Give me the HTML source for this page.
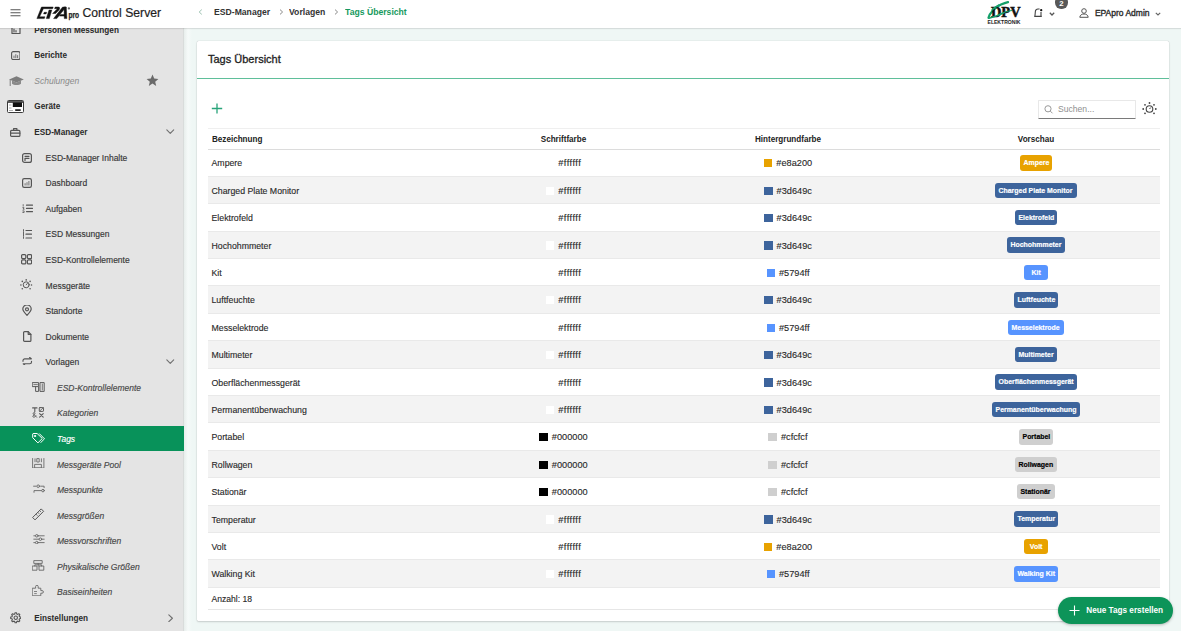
<!DOCTYPE html>
<html><head><meta charset="utf-8">
<style>
*{box-sizing:border-box;margin:0;padding:0}
html,body{width:1181px;height:631px;overflow:hidden;background:#eff7f5;font-family:"Liberation Sans",sans-serif;color:#333;position:relative}
#hdr{position:absolute;left:0;top:0;width:1181px;height:28px;background:#fff;z-index:5;box-shadow:0 1px 1px rgba(0,0,0,.10)}
#hdr svg{position:absolute}
#hdr .ttl{position:absolute;left:82.5px;top:5.5px;font-size:12.2px;line-height:15px;color:#1e1e1e;-webkit-text-stroke:.2px #1e1e1e}
.bc{position:absolute;top:5.5px;font-size:9.6px;line-height:12px;font-weight:bold;color:#333;transform:scaleX(.9);transform-origin:left}
.usr{position:absolute;left:1094.9px;top:7px;font-size:8.5px;line-height:12px;color:#2a2a2a;-webkit-text-stroke:.35px #2a2a2a}
#side{position:absolute;left:0;top:0;width:184px;height:631px;background:#e4e4e4;z-index:2;border-right:1px solid #d9dcdb}
#shadow{position:absolute;left:184px;top:28px;width:8px;height:603px;background:linear-gradient(90deg,#e8eeec,#f6faf9 50%,#eff7f5);z-index:1}
.it{position:absolute;left:0;width:184px;height:25.6px;font-size:8.5px;line-height:25.6px;white-space:nowrap}
.it svg{position:absolute}
.it span{position:absolute;top:1px}
.t1{left:34.3px;font-weight:bold;color:#2a2a2a;font-size:8.2px;margin-top:0}
.t2{left:45.6px;color:#363636;-webkit-text-stroke:.15px #363636}
.t3{left:57px;color:#474747;font-style:italic;-webkit-text-stroke:.15px #474747}
.dis .t1{font-weight:normal;font-style:italic;color:#8a8a8a;font-size:8.5px;margin-top:0}
.act{background:#08925a;height:25.1px}
.act span{color:#fff;-webkit-text-stroke:.15px #fff}
#card{position:absolute;left:197px;top:41px;width:972px;height:580px;background:#fff;border-radius:1.5px;box-shadow:0 0 1px rgba(0,0,0,.3),0 1px 2px rgba(0,0,0,.15)}
#cardline{position:absolute;left:197px;top:78px;width:972px;height:1px;background:#5fbf9a}
#cardttl{position:absolute;left:208px;top:51.5px;font-size:11px;line-height:15px;color:#222;-webkit-text-stroke:.3px #222}
.hl{position:absolute;left:208px;width:952px;height:1px;background:#efefef}
.hl2{position:absolute;left:208px;width:952px;height:1px;background:#dcdcdc}
.th{position:absolute;top:132.5px;font-size:9px;line-height:12px;font-weight:bold;color:#222;transform:scaleX(.9);transform-origin:left}
.thc{text-align:center;transform-origin:center}
.row{position:absolute;left:208px;width:952px;height:27.4px;border-bottom:1px solid #e9e9e9;font-size:8.75px;color:#282828}
.nm,.hx{-webkit-text-stroke:.12px #282828}
.row.gr{background:#f3f3f3}
.row span{position:absolute;top:1px;line-height:27px;height:27px;white-space:nowrap}
.nm{left:3.5px}
.cc{text-align:center}
.sw{display:inline-block;width:8.5px;height:8.3px;margin-right:4px;vertical-align:-1px}
.hx{font-style:normal;font-size:9.2px}
.hx.ff{letter-spacing:.5px}
.pv{position:absolute;top:5.9px;height:15.4px;border-radius:3px;text-align:center;white-space:nowrap}
.pv i{display:block;font-style:normal;font-weight:bold;font-size:8.1px;-webkit-text-stroke:.2px currentColor;line-height:15.4px;transform:scaleX(.857);transform-origin:center;margin:0 -20px}
.ft{position:absolute;left:208px;width:952px;height:22px;border-bottom:1px solid #e6e6e6;font-size:8.6px;line-height:22px;padding-left:3.5px;color:#282828;-webkit-text-stroke:.12px #282828}
.epa{position:absolute;left:36px;top:1.5px;font-size:15.6px;line-height:20px;font-weight:bold;font-style:italic;color:#111;letter-spacing:-1.2px;transform:scaleX(1.05);transform-origin:left}
.reg{position:absolute;left:67.5px;top:4px;font-size:5px;line-height:6px;color:#222}
.pro{position:absolute;left:68.5px;top:10px;font-size:7.6px;line-height:10px;font-weight:bold;color:#222;letter-spacing:-.3px}
.nbadge{position:absolute;left:1055.4px;top:-3.8px;width:12.3px;height:12.3px;border-radius:50%;background:#585858;color:#fff;font-size:7.8px;font-weight:bold;line-height:12.3px;text-align:center;padding-top:1.6px}
.srch{position:absolute;left:1038px;top:99.5px;width:98px;height:19px;background:#fff;border:1px solid #e8e8e8;border-bottom:1px solid #7a7a7a;border-radius:1px}
.srch span{position:absolute;left:19px;top:2.2px;font-size:8.6px;line-height:12px;color:#8f8f8f}
.fab{position:absolute;left:1058.3px;top:597.2px;width:115px;height:27.2px;border-radius:14px;background:#0d9459;box-shadow:0 1px 3px rgba(0,0,0,.25);z-index:6}
.fab span{position:absolute;left:28px;top:8px;font-size:8.2px;line-height:11px;font-weight:bold;color:#fff;white-space:nowrap}

</style></head><body>
<div id="hdr">
<svg style="left:10px;top:9px" width="11" height="8" viewBox="0 0 11 8"><path d="M0.5 .75h10M0.5 3.75h10M0.5 6.75h10" stroke="#555" stroke-width="1"/></svg>
<svg style="left:34px;top:3px" width="48" height="20" viewBox="34 3 48 20"><g fill="#111" stroke="#111" stroke-width=".45" stroke-linejoin="round">
<path d="M41.5 7H53.2L52.6 8.7H43.4L39.6 16.8H45L44.3 18.6H36.9z"/>
<path d="M44.2 12.3H46.7L46.1 13.9H43.6z"/>
<path d="M49 10.1H51.8L49.3 18.6H46.3z"/>
<path d="M55.2 7H58.2C60.2 7 60 8.8 59 10L55.6 13.5H52.6L56.9 9.2C57.3 8.8 57.2 8.7 56.6 8.7H54.6z"/>
<path d="M62.6 7H66L56.8 18.6H53.6z"/>
<path d="M64 7H66.3L66.9 18.6H64.3z"/>
<path d="M60.5 14.6H65V16.1H59.3z"/>
</g><circle cx="68.9" cy="8.4" r="1.15" fill="#666"/>
<text x="68.4" y="18.4" font-family="Liberation Sans" font-weight="bold" font-size="8.6" fill="#222" stroke="#222" stroke-width=".25" textLength="10.7" lengthAdjust="spacingAndGlyphs">pro</text></svg>
<span class="ttl">Control Server</span>
<svg style="left:198px;top:9px" width="5" height="6" viewBox="0 0 5 6"><path d="M3.8 .6L1.2 3l2.6 2.4" fill="none" stroke="#9cc0b0" stroke-width="1"/></svg>
<span class="bc" style="left:214px">ESD-Manager</span>
<svg style="left:278.5px;top:9px" width="5" height="6" viewBox="0 0 5 6"><path d="M1 .6L3.6 3 1 5.4" fill="none" stroke="#8a8a8a" stroke-width="1"/></svg>
<span class="bc" style="left:289px">Vorlagen</span>
<svg style="left:333.5px;top:9px" width="5" height="6" viewBox="0 0 5 6"><path d="M1 .6L3.6 3 1 5.4" fill="none" stroke="#8a8a8a" stroke-width="1"/></svg>
<span class="bc" style="left:345px;color:#16995d">Tags Übersicht</span>
<svg style="left:986px;top:1px" width="37" height="25" viewBox="0 0 37 25">
 <path d="M2.5 16.8C3.5 12 9 6.5 15 3.6c2.5-1.2 5.5-2.2 7-2.5" fill="none" stroke="#14a06a" stroke-width="2.2" stroke-linecap="round"/><text x="5" y="16.2" font-family="Liberation Serif" font-weight="bold" font-size="14.5" fill="#111" stroke="#111" stroke-width=".5" textLength="29.5" lengthAdjust="spacingAndGlyphs">DPV</text>
 <path d="M3 17.2c4-1 9-2.5 14-4.8M6 9c2-2 5-4 7-5" fill="none" stroke="#14a06a" stroke-width="1.4" stroke-linecap="round"/>
 <path d="M12 14c4-2 9-4 14-4.5" fill="none" stroke="#14a06a" stroke-width="1.2"/>
 <text x="1.5" y="22.6" font-family="Liberation Sans" font-weight="bold" font-size="6" fill="#222" textLength="33" lengthAdjust="spacingAndGlyphs">ELEKTRONIK</text>
</svg>
<svg style="left:1033px;top:7.5px" width="11" height="10" viewBox="0 0 11 10"><path d="M1.2 8.4h7.6M1.9 8.3L2.4 3.2C2.6 1.8 3.6 1 5 1h1.6M8 4v4.3" fill="none" stroke="#444" stroke-width="1.1"/><circle cx="8.2" cy="2.2" r="1.15" fill="#111"/></svg>
<svg style="left:1049px;top:11.8px" width="6" height="4" viewBox="0 0 6 4"><path d="M.8.8L3 3 5.2.8" fill="none" stroke="#555" stroke-width="1.25"/></svg>
<div class="nbadge">2</div>
<svg style="left:1079px;top:8px" width="10" height="10" viewBox="0 0 10 10"><circle cx="5" cy="3" r="2.3" fill="none" stroke="#555" stroke-width="1"/><path d="M.8 9.3C1 7 2.8 6 5 6s4 1 4.2 3.3z" fill="none" stroke="#555" stroke-width="1"/></svg>
<span class="usr">EPApro Admin</span>
<svg style="left:1155px;top:11.5px" width="6" height="4" viewBox="0 0 6 4"><path d="M.8.8L3 3 5.2.8" fill="none" stroke="#666" stroke-width="1.15"/></svg>
</div>
<div id="side">
<div class="it" style="top:16.72px"><svg style="left:10.5px;top:7.28px" width="10" height="11" viewBox="0 0 10 11" fill="none" stroke="#555" stroke-width="1.2" stroke-linecap="round" stroke-linejoin="round"><path d="M1 1v8.5h8V4"/><path d="M3 5v3M5 6.5v1.5"/></svg><span class="t1">Personen Messungen</span></div>
<div class="it" style="top:42.30px"><svg style="left:10.6px;top:8.5px" width="9.6" height="9.2" viewBox="0 0 9.6 9.2" fill="none" stroke="#555" stroke-width="1.1" stroke-linecap="round" stroke-linejoin="round"><rect x=".6" y=".6" width="8.4" height="8" rx="1.6"/><path d="M3 6.8V5M4.8 6.8V3.6M6.6 6.8V4.6" stroke-width=".8"/></svg><span class="t1">Berichte</span></div>
<div class="it dis" style="top:67.88px"><svg style="left:8.5px;top:8.42px" width="15" height="10.5" viewBox="0 0 15 10.5" fill="none" stroke="#555" stroke-width="1.2" stroke-linecap="round" stroke-linejoin="round"><path d="M7.5 0.3L14.8 3.4 7.5 6.5 0.2 3.4z" fill="#7d7d7d" stroke="none"/><path d="M3 4.6v3.2c1.5 1.6 7.5 1.6 9 0V4.6L7.5 6.6z" fill="#8a8a8a" stroke="none"/><path d="M1.2 3.6v6" stroke="#7d7d7d" stroke-width="1"/></svg><span class="t1">Schulungen</span><svg style="left:145.5px;top:6.62px" width="13" height="12.5" viewBox="0 0 13 12.5" fill="none" stroke="#555" stroke-width="1.2" stroke-linecap="round" stroke-linejoin="round"><path d="M6.5.6l1.7 4 4.2.3-3.2 2.8 1 4.2-3.7-2.3-3.7 2.3 1-4.2L.6 4.9l4.2-.3z" fill="#6a6a6a" stroke="none"/></svg></div>
<div class="it" style="top:93.46px"><svg style="left:7.2px;top:6.34px" width="17" height="13" viewBox="0 0 17 13"><rect x=".5" y=".5" width="16" height="12" rx="1" fill="#fff" stroke="#3a3a3a" stroke-width="1"/><rect x="1" y="1" width="15" height="2" fill="#5a5a5a"/><rect x="5.8" y="2.5" width="9.2" height="4.5" fill="#111"/><rect x="8.2" y="9.3" width="5.5" height="1.6" fill="#111"/><path d="M2 5h2.5M2 8h2.5M2 10.5h4" stroke="#999" stroke-width=".8"/></svg><span class="t1">Geräte</span></div>
<div class="it" style="top:119.04px"><svg style="left:10.3px;top:8.56px" width="10.5" height="9" viewBox="0 0 10.5 9" fill="none" stroke="#555" stroke-width="1.2" stroke-linecap="round" stroke-linejoin="round"><rect x=".6" y="2.4" width="9.3" height="6" rx="1"/><path d="M3.6 2.4V.7h3.3v1.7M.6 5.2h9.3"/></svg><span class="t1">ESD-Manager</span><svg style="left:166px;top:9.6px" width="8.5" height="5.5" viewBox="0 0 8.5 5.5" fill="none" stroke="#707070" stroke-width="1.1" stroke-linecap="round" stroke-linejoin="round"><path d="M.8 .8l3.45 3.6L7.7 .8"/></svg></div>
<div class="it" style="top:144.62px"><svg style="left:22px;top:8.28px" width="10" height="10" viewBox="0 0 10 10" fill="none" stroke="#555" stroke-width="1.2" stroke-linecap="round" stroke-linejoin="round"><rect x=".6" y=".6" width="8.8" height="8.8" rx="2"/><path d="M3 3.3h4M3 5.3h4M3 7.5V5.3"/></svg><span class="t2">ESD-Manager Inhalte</span></div>
<div class="it" style="top:170.20px"><svg style="left:22px;top:8.2px" width="10" height="10" viewBox="0 0 10 10" fill="none" stroke="#555" stroke-width="1.2" stroke-linecap="round" stroke-linejoin="round"><rect x=".6" y=".6" width="8.8" height="8.8" rx="1.6"/><path d="M3.1 7.1V5.6M5 7.1V4.6M6.9 7.1V3.4" stroke-width=".8"/></svg><span class="t2">Dashboard</span></div>
<div class="it" style="top:195.78px"><svg style="left:21.6px;top:8.62px" width="11" height="9" viewBox="0 0 11 9" fill="none" stroke="#555" stroke-width="1.2" stroke-linecap="round" stroke-linejoin="round"><path d="M4.5 1.2h6M4.5 4.4h6M4.5 7.6h6" stroke-width="1.2"/><path d="M1.2 .6v1.5M.8 3.6h1.2l-1 1.6h1.2M.8 6.9h1.3v1.6H.8" stroke-width=".8"/></svg><span class="t2">Aufgaben</span></div>
<div class="it" style="top:221.36px"><svg style="left:22px;top:7.84px" width="10" height="10.5" viewBox="0 0 10 10.5" fill="none" stroke="#555" stroke-width="1.2" stroke-linecap="round" stroke-linejoin="round"><path d="M4 1.5h5.5M4 5.2h5.5M4 9h5.5" stroke-width="1.2"/><path d="M1.5 .6v9.4" stroke-width=".9" stroke-dasharray="1.6 .8"/></svg><span class="t2">ESD Messungen</span></div>
<div class="it" style="top:246.94px"><svg style="left:21px;top:7.46px" width="11.2" height="10.5" viewBox="0 0 11.2 10.5" fill="none" stroke="#555" stroke-width="1.2" stroke-linecap="round" stroke-linejoin="round"><rect x=".6" y=".6" width="4.2" height="4" rx="1"/><rect x="6.4" y=".6" width="4.2" height="4" rx="1"/><rect x=".6" y="5.9" width="4.2" height="4" rx="1"/><rect x="6.4" y="5.9" width="4.2" height="4" rx="1"/></svg><span class="t2">ESD-Kontrollelemente</span></div>
<div class="it" style="top:272.52px"><svg style="left:20.4px;top:6.48px" width="12.4" height="11" viewBox="0 0 12.4 11" fill="none" stroke="#555" stroke-width="1.2" stroke-linecap="round" stroke-linejoin="round"><circle cx="6.2" cy="5.8" r="3" stroke-width="1"/><path d="M6.2 5.8l1.2-1.4" stroke-width=".9"/><g fill="#555" stroke="none"><circle cx="6.2" cy=".9" r=".8"/><circle cx="2.3" cy="2.4" r=".8"/><circle cx="10.1" cy="2.4" r=".8"/><circle cx=".9" cy="6" r=".8"/><circle cx="11.5" cy="6" r=".8"/><circle cx="2.3" cy="9.8" r=".8"/><circle cx="10.1" cy="9.8" r=".8"/></g></svg><span class="t2">Messgeräte</span></div>
<div class="it" style="top:298.10px"><svg style="left:22px;top:6.7px" width="10" height="11" viewBox="0 0 10 11" fill="none" stroke="#555" stroke-width="1.2" stroke-linecap="round" stroke-linejoin="round"><path d="M5 10.3C2.5 7.8.8 5.8.8 4.1A4.2 4.2 0 0 1 9.2 4.1C9.2 5.8 7.5 7.8 5 10.3z"/><circle cx="5" cy="4.3" r="1.5"/></svg><span class="t2">Standorte</span></div>
<div class="it" style="top:323.68px"><svg style="left:23px;top:7.32px" width="8.5" height="11" viewBox="0 0 8.5 11" fill="none" stroke="#555" stroke-width="1.2" stroke-linecap="round" stroke-linejoin="round"><path d="M.6 1.6A1 1 0 0 1 1.6.6h3.6l2.7 2.7v6.1a1 1 0 0 1-1 1H1.6a1 1 0 0 1-1-1z"/><path d="M5.2.6v2.7h2.7"/></svg><span class="t2">Dokumente</span></div>
<div class="it" style="top:349.26px"><svg style="left:22px;top:7.74px" width="10.5" height="8.5" viewBox="0 0 10.5 8.5" fill="none" stroke="#555" stroke-width="1.2" stroke-linecap="round" stroke-linejoin="round"><path d="M1 4.3V3.6A1.8 1.8 0 0 1 2.8 1.8h6.5L7.6.4M9.5 4.2v.7A1.8 1.8 0 0 1 7.7 6.7H1.2l1.7 1.4" stroke-width="1.15"/></svg><span class="t2">Vorlagen</span><svg style="left:166px;top:9.6px" width="8.5" height="5.5" viewBox="0 0 8.5 5.5" fill="none" stroke="#707070" stroke-width="1.1" stroke-linecap="round" stroke-linejoin="round"><path d="M.8 .8l3.45 3.6L7.7 .8"/></svg></div>
<div class="it" style="top:374.84px"><svg style="left:31.8px;top:7.66px" width="13" height="10" viewBox="0 0 13 10" fill="none" stroke="#5a5a5a" stroke-width="1.2" stroke-linecap="round" stroke-linejoin="round"><rect x=".6" y=".6" width="6" height="4" stroke-width="1"/><path d="M1.8 2.6h3.6" stroke-width=".8"/><path d="M3.6 4.6v4.8h3V5" stroke-width="1"/><rect x="8.4" y=".6" width="3.8" height="8.8" stroke-width="1"/><path d="M10.3 2v6" stroke-width=".8"/></svg><span class="t3">ESD-Kontrollelemente</span></div>
<div class="it" style="top:400.42px"><svg style="left:32px;top:6.58px" width="12.5" height="11" viewBox="0 0 12.5 11" fill="none" stroke="#5a5a5a" stroke-width="1.2" stroke-linecap="round" stroke-linejoin="round"><path d="M.6 .9h4.4M2.8.9v3.8" stroke-width="1.1"/><rect x="7.3" y=".6" width="4.2" height="3.8" rx=".6" stroke-width="1"/><path d="M7.3 4.4l4.2-3.8" stroke-width=".8"/><path d="M4.6 10.2L1.6 7.2c-.8-.8-.3-1.6.5-1.6s1.2.8.4 1.6L1.2 8.8c-.6.7-.2 1.4.6 1.4.7 0 1.4-.6 2-1.3" stroke-width="1"/><path d="M7.6 6.6l3.6 3.6M11.2 6.6l-3.6 3.6" stroke-width="1.1"/></svg><span class="t3">Kategorien</span></div>
<div class="it act" style="top:426.00px"><svg style="left:32px;top:6.6px" width="13.5" height="10.5" viewBox="0 0 13.5 10.5" fill="none" stroke="#fff" stroke-width="1" stroke-linecap="round" stroke-linejoin="round"><path d="M.7 1.3v3.4l5.2 5.2 4.4-4.4L5.1.5H1.5z"/><path d="M7.5.8l5 5-3.9 3.9" /><circle cx="3" cy="3" r=".6" fill="#fff"/></svg><span class="t3">Tags</span></div>
<div class="it" style="top:451.58px"><svg style="left:32px;top:6.42px" width="12.5" height="10.5" viewBox="0 0 12.5 10.5" fill="none" stroke="#6a6a6a" stroke-width="1.2" stroke-linecap="round" stroke-linejoin="round"><path d="M.6 .5v9.5h11.3V.5M3 .8v3M5.2.6h2v3.4h-2zM9.4.8v3M3 6.4h6.4v3.6H3z" stroke-width=".9"/></svg><span class="t3">Messgeräte Pool</span></div>
<div class="it" style="top:477.16px"><svg style="left:32.5px;top:6.84px" width="12" height="9.5" viewBox="0 0 12 9.5" fill="none" stroke="#666" stroke-width="1.2" stroke-linecap="round" stroke-linejoin="round"><path d="M.6 2.2h2.5M7.6 2.2h3.5v1.4M1 8.3V6.6h7.4" stroke-width=".9"/><circle cx="5.2" cy="2.2" r="1.3" stroke-width=".9"/><circle cx="10" cy="6.6" r="1.3" stroke-width=".9"/></svg><span class="t3">Messpunkte</span></div>
<div class="it" style="top:502.74px"><svg style="left:32px;top:4.86px" width="12.5" height="12.5" viewBox="0 0 12.5 12.5" fill="none" stroke="#555" stroke-width="1" stroke-linecap="round" stroke-linejoin="round"><path d="M.9 9.2L9.2.9l2.4 2.4-8.3 8.3z"/><path d="M4 6.2l1.2 1.2M5.8 4.4l1.2 1.2M7.6 2.6l1.2 1.2" stroke-width=".8"/></svg><span class="t3">Messgrößen</span></div>
<div class="it" style="top:528.32px"><svg style="left:32.5px;top:5.68px" width="12" height="10.5" viewBox="0 0 12 10.5" fill="none" stroke="#666" stroke-width="1.2" stroke-linecap="round" stroke-linejoin="round"><path d="M.8 1.8h10.4M.8 5.2h10.4M.8 8.6h10.4" stroke-width=".9"/><circle cx="3.8" cy="1.8" r="1.3" fill="#e4e4e4" stroke-width=".9"/><circle cx="7.4" cy="5.2" r="1.3" fill="#e4e4e4" stroke-width=".9"/><circle cx="3.8" cy="8.6" r="1.3" fill="#e4e4e4" stroke-width=".9"/></svg><span class="t3">Messvorschriften</span></div>
<div class="it" style="top:553.90px"><svg style="left:32px;top:5.7px" width="12.5" height="11" viewBox="0 0 12.5 11" fill="none" stroke="#666" stroke-width="1.2" stroke-linecap="round" stroke-linejoin="round"><path d="M2.2.6h8v2.8h-8zM.6 6h4.4v4.2H.6zM7.4 6h4.4v4.2H7.4zM6.2 3.4V6M2.8 6V4.8h6.8V6" stroke-width=".9"/></svg><span class="t3">Physikalische Größen</span></div>
<div class="it" style="top:579.48px"><svg style="left:32px;top:5.52px" width="12.5" height="11.5" viewBox="0 0 12.5 11.5" fill="none" stroke="#666" stroke-width="1.2" stroke-linecap="round" stroke-linejoin="round"><path d="M.6 3.2h3V1.6a1.3 1.3 0 0 1 2.6 0v1.6h2.6v2.4h1.3a1.3 1.3 0 0 1 0 2.6H8.8v2.6H.6z" stroke-width=".9"/><path d="M2.4 6.5h2.2M2.6 8.6h1.8" stroke-width=".8"/></svg><span class="t3">Basiseinheiten</span></div>
<div class="it" style="top:605.06px"><svg style="left:9.8px;top:7.14px" width="11.5" height="11.5" viewBox="0 0 11.5 11.5" fill="none" stroke="#555" stroke-width="1.2" stroke-linecap="round" stroke-linejoin="round"><path d="M9.51 4.73 L10.81 5.08 L10.81 6.42 L9.51 6.77 L9.13 7.69 L9.80 8.85 L8.85 9.80 L7.69 9.13 L6.77 9.51 L6.42 10.81 L5.08 10.81 L4.73 9.51 L3.81 9.13 L2.65 9.80 L1.70 8.85 L2.37 7.69 L1.99 6.77 L0.69 6.42 L0.69 5.08 L1.99 4.73 L2.37 3.81 L1.70 2.65 L2.65 1.70 L3.81 2.37 L4.73 1.99 L5.08 0.69 L6.42 0.69 L6.77 1.99 L7.69 2.37 L8.85 1.70 L9.80 2.65 L9.13 3.81z" stroke-width="1.1"/><circle cx="5.75" cy="5.75" r="1.7" stroke-width="1.1"/></svg><span class="t1">Einstellungen</span><svg style="left:167.5px;top:8.5px" width="5.5" height="8.5" viewBox="0 0 5.5 8.5" fill="none" stroke="#707070" stroke-width="1.1" stroke-linecap="round" stroke-linejoin="round"><path d="M.8.8l3.6 3.45-3.6 3.45"/></svg></div>
</div>
<div id="shadow"></div>
<div id="card"></div>
<div id="cardline"></div>
<div id="cardttl">Tags Übersicht</div>
<svg style="position:absolute;left:211px;top:103px" width="12" height="11" viewBox="0 0 12 11"><path d="M6 .5v10M.8 5.5h10.4" stroke="#28a47a" stroke-width="1.3"/></svg>
<div class="srch"><svg style="position:absolute;left:4.5px;top:4.5px" width="10" height="9" viewBox="0 0 10 9"><circle cx="4" cy="3.8" r="3.1" fill="none" stroke="#999" stroke-width="1"/><path d="M6.3 6.1l2.2 2.2" stroke="#999" stroke-width="1"/></svg><span>Suchen...</span></div>
<svg style="position:absolute;left:1142px;top:101.5px" width="15" height="13" viewBox="0 0 15 13"><circle cx="7.5" cy="7" r="3.3" fill="none" stroke="#444" stroke-width="1.1"/><path d="M7.5 7l1.3-1.5" stroke="#444" stroke-width="1"/><g fill="#444"><circle cx="7.5" cy="1" r=".9"/><circle cx="3" cy="2.8" r=".9"/><circle cx="12" cy="2.8" r=".9"/><circle cx="1.2" cy="7" r=".9"/><circle cx="13.8" cy="7" r=".9"/><circle cx="3" cy="11.3" r=".9"/><circle cx="12" cy="11.3" r=".9"/></g></svg>
<div class="hl" style="top:128px"></div><div class="th" style="left:211.5px">Bezeichnung</div><div class="th thc" style="left:463px;width:201px">Schriftfarbe</div><div class="th thc" style="left:664px;width:248px">Hintergrundfarbe</div><div class="th thc" style="left:912px;width:248px">Vorschau</div><div class="hl2" style="top:149px"></div>
<div class="row" style="top:149.40px"><span class="nm">Ampere</span><span class="cc" style="left:255px;width:201px"><i class="sw" style="background:#ffffff"></i><em class="hx ff">#ffffff</em></span><span class="cc" style="left:456px;width:248px"><i class="sw" style="background:#e8a200"></i><em class="hx">#e8a200</em></span><b class="pv" style="left:811.58px;width:32.85px;background:#e8a200;color:#ffffff"><i style="color:#ffffff">Ampere</i></b></div>
<div class="row gr" style="top:176.80px"><span class="nm">Charged Plate Monitor</span><span class="cc" style="left:255px;width:201px"><i class="sw" style="background:#ffffff"></i><em class="hx ff">#ffffff</em></span><span class="cc" style="left:456px;width:248px"><i class="sw" style="background:#3d649c"></i><em class="hx">#3d649c</em></span><b class="pv" style="left:787.48px;width:81.05px;background:#3d649c;color:#ffffff"><i style="color:#ffffff">Charged Plate Monitor</i></b></div>
<div class="row" style="top:204.20px"><span class="nm">Elektrofeld</span><span class="cc" style="left:255px;width:201px"><i class="sw" style="background:#ffffff"></i><em class="hx ff">#ffffff</em></span><span class="cc" style="left:456px;width:248px"><i class="sw" style="background:#3d649c"></i><em class="hx">#3d649c</em></span><b class="pv" style="left:806.56px;width:42.87px;background:#3d649c;color:#ffffff"><i style="color:#ffffff">Elektrofeld</i></b></div>
<div class="row gr" style="top:231.60px"><span class="nm">Hochohmmeter</span><span class="cc" style="left:255px;width:201px"><i class="sw" style="background:#ffffff"></i><em class="hx ff">#ffffff</em></span><span class="cc" style="left:456px;width:248px"><i class="sw" style="background:#3d649c"></i><em class="hx">#3d649c</em></span><b class="pv" style="left:799.04px;width:57.91px;background:#3d649c;color:#ffffff"><i style="color:#ffffff">Hochohmmeter</i></b></div>
<div class="row" style="top:259.00px"><span class="nm">Kit</span><span class="cc" style="left:255px;width:201px"><i class="sw" style="background:#ffffff"></i><em class="hx ff">#ffffff</em></span><span class="cc" style="left:456px;width:248px"><i class="sw" style="background:#5794ff"></i><em class="hx">#5794ff</em></span><b class="pv" style="left:815.90px;width:24.20px;background:#5794ff;color:#ffffff"><i style="color:#ffffff">Kit</i></b></div>
<div class="row gr" style="top:286.40px"><span class="nm">Luftfeuchte</span><span class="cc" style="left:255px;width:201px"><i class="sw" style="background:#ffffff"></i><em class="hx ff">#ffffff</em></span><span class="cc" style="left:456px;width:248px"><i class="sw" style="background:#3d649c"></i><em class="hx">#3d649c</em></span><b class="pv" style="left:805.61px;width:44.79px;background:#3d649c;color:#ffffff"><i style="color:#ffffff">Luftfeuchte</i></b></div>
<div class="row" style="top:313.80px"><span class="nm">Messelektrode</span><span class="cc" style="left:255px;width:201px"><i class="sw" style="background:#ffffff"></i><em class="hx ff">#ffffff</em></span><span class="cc" style="left:456px;width:248px"><i class="sw" style="background:#5794ff"></i><em class="hx">#5794ff</em></span><b class="pv" style="left:800.39px;width:55.23px;background:#5794ff;color:#ffffff"><i style="color:#ffffff">Messelektrode</i></b></div>
<div class="row gr" style="top:341.20px"><span class="nm">Multimeter</span><span class="cc" style="left:255px;width:201px"><i class="sw" style="background:#ffffff"></i><em class="hx ff">#ffffff</em></span><span class="cc" style="left:456px;width:248px"><i class="sw" style="background:#3d649c"></i><em class="hx">#3d649c</em></span><b class="pv" style="left:806.95px;width:42.10px;background:#3d649c;color:#ffffff"><i style="color:#ffffff">Multimeter</i></b></div>
<div class="row" style="top:368.60px"><span class="nm">Oberflächenmessgerät</span><span class="cc" style="left:255px;width:201px"><i class="sw" style="background:#ffffff"></i><em class="hx ff">#ffffff</em></span><span class="cc" style="left:456px;width:248px"><i class="sw" style="background:#3d649c"></i><em class="hx">#3d649c</em></span><b class="pv" style="left:786.88px;width:82.23px;background:#3d649c;color:#ffffff"><i style="color:#ffffff">Oberflächenmessgerät</i></b></div>
<div class="row gr" style="top:396.00px"><span class="nm">Permanentüberwachung</span><span class="cc" style="left:255px;width:201px"><i class="sw" style="background:#ffffff"></i><em class="hx ff">#ffffff</em></span><span class="cc" style="left:456px;width:248px"><i class="sw" style="background:#3d649c"></i><em class="hx">#3d649c</em></span><b class="pv" style="left:784.00px;width:88.00px;background:#3d649c;color:#ffffff"><i style="color:#ffffff">Permanentüberwachung</i></b></div>
<div class="row" style="top:423.40px"><span class="nm">Portabel</span><span class="cc" style="left:255px;width:201px"><i class="sw" style="background:#000000"></i><em class="hx">#000000</em></span><span class="cc" style="left:456px;width:248px"><i class="sw" style="background:#cfcfcf"></i><em class="hx">#cfcfcf</em></span><b class="pv" style="left:810.61px;width:34.77px;background:#cfcfcf;color:#000000"><i style="color:#000000">Portabel</i></b></div>
<div class="row gr" style="top:450.80px"><span class="nm">Rollwagen</span><span class="cc" style="left:255px;width:201px"><i class="sw" style="background:#000000"></i><em class="hx">#000000</em></span><span class="cc" style="left:456px;width:248px"><i class="sw" style="background:#cfcfcf"></i><em class="hx">#cfcfcf</em></span><b class="pv" style="left:807.14px;width:41.71px;background:#cfcfcf;color:#000000"><i style="color:#000000">Rollwagen</i></b></div>
<div class="row" style="top:478.20px"><span class="nm">Stationär</span><span class="cc" style="left:255px;width:201px"><i class="sw" style="background:#000000"></i><em class="hx">#000000</em></span><span class="cc" style="left:456px;width:248px"><i class="sw" style="background:#cfcfcf"></i><em class="hx">#cfcfcf</em></span><b class="pv" style="left:809.46px;width:37.08px;background:#cfcfcf;color:#000000"><i style="color:#000000">Stationär</i></b></div>
<div class="row gr" style="top:505.60px"><span class="nm">Temperatur</span><span class="cc" style="left:255px;width:201px"><i class="sw" style="background:#ffffff"></i><em class="hx ff">#ffffff</em></span><span class="cc" style="left:456px;width:248px"><i class="sw" style="background:#3d649c"></i><em class="hx">#3d649c</em></span><b class="pv" style="left:805.66px;width:44.67px;background:#3d649c;color:#ffffff"><i style="color:#ffffff">Temperatur</i></b></div>
<div class="row" style="top:533.00px"><span class="nm">Volt</span><span class="cc" style="left:255px;width:201px"><i class="sw" style="background:#ffffff"></i><em class="hx ff">#ffffff</em></span><span class="cc" style="left:456px;width:248px"><i class="sw" style="background:#e8a200"></i><em class="hx">#e8a200</em></span><b class="pv" style="left:815.90px;width:24.20px;background:#e8a200;color:#ffffff"><i style="color:#ffffff">Volt</i></b></div>
<div class="row gr" style="top:560.40px"><span class="nm">Walking Kit</span><span class="cc" style="left:255px;width:201px"><i class="sw" style="background:#ffffff"></i><em class="hx ff">#ffffff</em></span><span class="cc" style="left:456px;width:248px"><i class="sw" style="background:#5794ff"></i><em class="hx">#5794ff</em></span><b class="pv" style="left:805.73px;width:44.54px;background:#5794ff;color:#ffffff"><i style="color:#ffffff">Walking Kit</i></b></div>
<div class="ft" style="top:587.80px">Anzahl: 18</div>
<div class="fab"><svg style="position:absolute;left:11px;top:8.3px" width="11" height="11" viewBox="0 0 11 11"><path d="M5.5 .5v10M.5 5.5h10" stroke="#fff" stroke-width="1.1"/></svg><span>Neue Tags erstellen</span></div>
</body></html>
